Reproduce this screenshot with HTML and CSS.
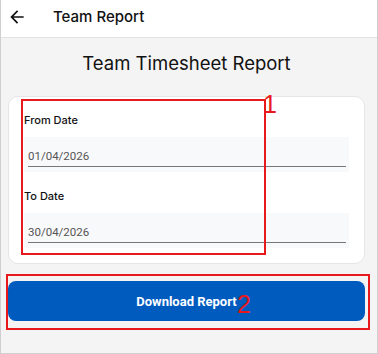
FILE: index.html
```html
<!DOCTYPE html>
<html lang="en">
<head>
    <meta charset="UTF-8">
    <meta name="viewport" content="width=device-width, initial-scale=1.0">
    <title>Team Report</title>
    <link rel="stylesheet" href="styles.css">
</head>
<body>
    <div class="screen">
        <!-- App bar -->
        <header class="app-bar">
            <svg class="back-icon" viewBox="0 0 24 24" width="20" height="20">
                <path d="M20 11H7.83l5.59-5.59L12 4l-8 8 8 8 1.41-1.41L7.83 13H20v-2z" fill="#111"/>
            </svg>
            <h1 class="app-title">Team Report</h1>
        </header>

        <main class="content">
            <h2 class="page-title">Team Timesheet Report</h2>

            <section class="card">
                <div class="field">
                    <label class="field-label">From Date</label>
                    <div class="field-input">
                        <div class="field-value">01/04/2026</div>
                    </div>
                </div>
                <div class="field">
                    <label class="field-label">To Date</label>
                    <div class="field-input">
                        <div class="field-value">30/04/2026</div>
                    </div>
                </div>
            </section>

            <button class="download-button">Download Report</button>
        </main>

        <!-- Annotation marks -->
        <div class="mark mark-one"><span class="mark-number">1</span></div>
        <div class="mark mark-two"><span class="mark-number">2</span></div>
    </div>
</body>
</html>
```

FILE: styles.css
```css
body {
    margin: 0;
    font-family: Inter, "Noto Sans", sans-serif;
    background: #f4f4f4;
}

.screen {
    position: relative;
    width: 378px;
    height: 354px;
    box-sizing: border-box;
    border: 1px solid #cfcfcf;
    border-top: none;
    background: #f4f4f4;
    overflow: hidden;
}

.app-bar {
    display: flex;
    align-items: center;
    height: 38px;
    padding: 0 0 4px 6px;
    box-sizing: border-box;
    background: white;
    border-bottom: 1px solid #e2e2e2;
}

.back-icon {
    flex-shrink: 0;
}

.app-title {
    margin: 0 0 0 26px;
    font-size: 15px;
    font-weight: 500;
    color: #111;
}

.content {
    display: flex;
    flex-direction: column;
    padding: 0 12px 0 7px;
}

.page-title {
    margin: 11px 0 19px;
    text-align: center;
    font-size: 18.5px;
    line-height: 28px;
    font-weight: 400;
    color: #111;
}

.card {
    display: flex;
    flex-direction: column;
    gap: 16px;
    padding: 15px;
    background: white;
    border: 1px solid #e6e6e6;
    border-radius: 10px;
}

.field-label {
    display: block;
    margin-bottom: 9px;
    font-size: 11px;
    line-height: 16px;
    font-weight: 500;
    color: #111;
}

.field-input {
    padding: 0 3px 5px 4px;
    background: #f8f9fa;
}

.field-value {
    height: 30px;
    box-sizing: border-box;
    padding-top: 11px;
    border-bottom: 1px solid #777;
    font-family: Roboto, sans-serif;
    font-size: 11.5px;
    line-height: 16px;
    color: #555;
}

.download-button {
    margin-top: 17px;
    height: 40px;
    border: none;
    border-radius: 8px;
    background: #005bbf;
    color: white;
    font-family: Roboto, sans-serif;
    font-size: 13px;
    font-weight: 700;
    cursor: pointer;
}

.mark {
    position: absolute;
    box-sizing: border-box;
    border: 2px solid #e8191c;
}

.mark-one {
    left: 20px;
    top: 99px;
    width: 245px;
    height: 156px;
}

.mark-two {
    left: 5px;
    top: 274px;
    width: 364px;
    height: 56px;
}

.mark-number {
    position: absolute;
    font-family: "Liberation Sans", sans-serif;
    font-size: 25px;
    line-height: 25px;
    color: #e8191c;
}

.mark-one .mark-number {
    left: 240px;
    top: -9px;
}

.mark-two .mark-number {
    left: 229px;
    top: 16px;
}
```
